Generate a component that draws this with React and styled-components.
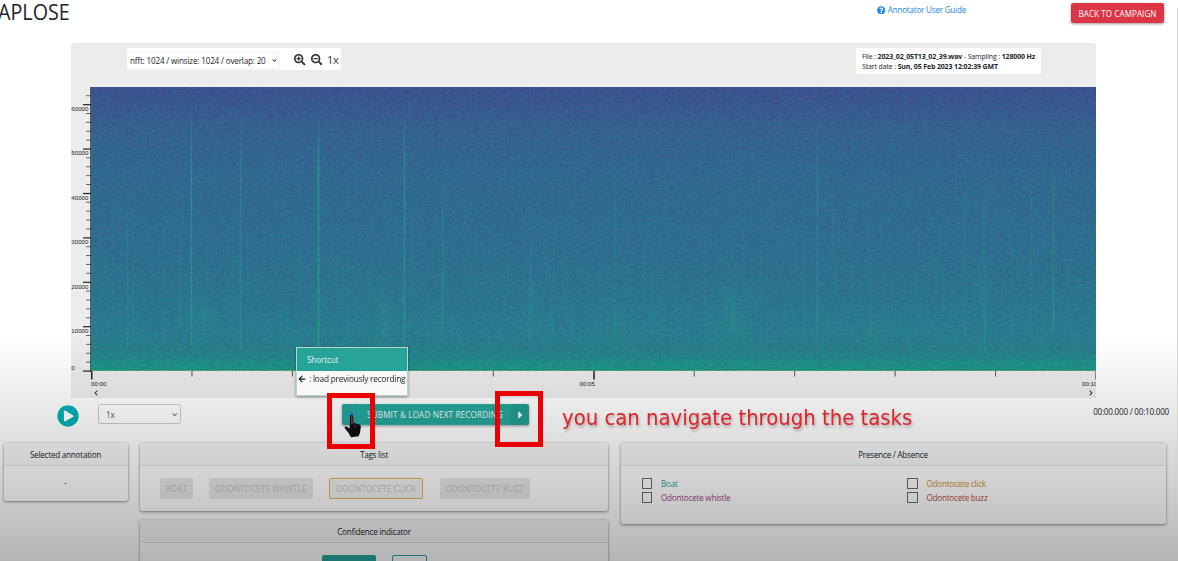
import React, { useEffect, useRef } from 'react';
import styled, { createGlobalStyle } from 'styled-components';
import {
  FaSearchPlus, FaSearchMinus, FaQuestionCircle, FaPlayCircle,
  FaArrowLeft, FaCaretLeft, FaCaretRight, FaChevronDown, FaChevronLeft, FaChevronRight,
} from 'react-icons/fa';

const Global = createGlobalStyle`
  * { box-sizing: border-box; }
  svg { flex-shrink: 0; }
  body {
    margin: 0;
    background: #fff;
    overflow: hidden;
    color: #212529;
    font: 8.1px/12px "Open Sans", "Noto Sans", sans-serif;
    letter-spacing: -0.22px;
  }
`;

const Page = styled.div`
  position: relative;
  height: 561px;
  overflow: hidden;
  display: flex;
  flex-direction: column;
`;

const Header = styled.header`
  height: 43px;
  flex: none;
  display: flex;
  align-items: flex-start;
  padding-right: 14px;
`;
const Title = styled.h1`
  margin: -3px 0 0 -2px;
  flex: 1;
  font-size: 21.8px;
  line-height: 30px;
  font-weight: 400;
  letter-spacing: 0;
  transform: scaleX(0.905);
  transform-origin: left;
`;
const GuideLink = styled.a`
  display: flex;
  align-items: center;
  gap: 2.5px;
  margin: 4px 105px 0 0;
  color: #1c86e8;
  svg { width: 8.5px; height: 8.5px; }
`;
const BackButton = styled.button`
  width: 93px;
  height: 20px;
  margin-top: 3px;
  padding: 1px 0 0;
  border: 0;
  border-radius: 2px;
  background: #dc3545;
  color: #fff;
  font: inherit;
  letter-spacing: 0.06px;
  white-space: nowrap;
  box-shadow: 0 1px 3px rgba(0, 0, 0, 0.4);
`;

const Workbench = styled.section`
  width: 1025px;
  height: 355px;
  flex: none;
  margin-left: 71px;
  background: #ececec;
  border-radius: 2px 2px 0 0;
`;
const Toolbar = styled.div`
  height: 44px;
  display: flex;
  justify-content: space-between;
  align-items: flex-start;
  padding: 5px 55px 0 56px;
`;
const ZoomControls = styled.div`
  width: 214px;
  height: 22px;
  display: flex;
  align-items: center;
  background: #fff;
  border-radius: 2px;
  padding-top: 3px;
`;
const FftSelect = styled.div`
  width: 153px;
  height: 17px;
  display: flex;
  align-items: center;
  gap: 6px;
  padding-left: 3px;
  white-space: nowrap;
  letter-spacing: -0.17px;
  border: 1px solid #f3f3f3;
  border-left: 0;
  svg { width: 5px; height: 5px; }
`;
const ZoomButtons = styled.div`
  display: flex;
  align-items: center;
  gap: 5px;
  padding: 0 0 1px 14px;
  font-size: 11px;
  color: #333;
  svg { width: 11.5px; height: 11.5px; }
`;
const FileInfo = styled.div`
  width: 185px;
  height: 26px;
  padding: 4px 0 0 6px;
  background: #fff;
  border-radius: 2px;
  font-size: 7px;
  line-height: 9.8px;
  letter-spacing: -0.14px;
  white-space: nowrap;
  b { font-weight: 700; }
`;
const Plot = styled.div`
  display: grid;
  grid-template-columns: 20px 1005px;
  grid-template-rows: 284px 27px;
`;
const Spectrum = styled.canvas`
  display: block;
  width: 1005px;
  height: 284px;
`;
const Axis = styled.svg`
  display: block;
  overflow: hidden;
  font-family: "Liberation Sans", Arial, sans-serif;
  font-size: 6.2px;
  letter-spacing: 0;
`;
const FrequencyAxis = styled(Axis)`
  height: 293px;
`;
const TimeColumn = styled.div`
  grid-column: 2;
  height: 27px;
  display: flex;
  flex-direction: column;
`;
const Scroller = styled.div`
  display: flex;
  justify-content: space-between;
  padding: 1px 2px 0 2px;
  color: #333;
  svg { width: 6px; height: 6px; }
`;

const Playback = styled.div`
  height: 45px;
  flex: none;
  display: flex;
  align-items: flex-start;
  padding: 6px 9px 0 57px;
`;
const PlayButton = styled.div`
  width: 22px;
  height: 24px;
  display: flex;
  align-items: center;
  color: #00b0b6;
  svg { width: 22px; height: 22px; border-radius: 50%; background: radial-gradient(#fff 55%, transparent 56%); }
`;
const SpeedSelect = styled.div`
  width: 83px;
  height: 20px;
  margin-left: 19px;
  display: flex;
  align-items: center;
  justify-content: space-between;
  padding: 1px 3px 0 7px;
  border: 1px solid #ccc;
  border-radius: 2.5px;
  background: #fff;
  color: #555;
  svg { width: 5.5px; height: 5.5px; }
`;
const SubmitGroup = styled.div`
  width: 187px;
  height: 21px;
  margin-left: 161px;
  display: flex;
  border-radius: 2px;
  background: #26a69a;
  color: #eefaf8;
  box-shadow: 0 1px 3px rgba(0, 0, 0, 0.4);
`;
const StepButton = styled.div`
  width: ${(p) => p.$width}px;
  display: flex;
  align-items: center;
  justify-content: center;
  padding-top: 1.5px;
  color: ${(p) => p.$color};
  background: ${(p) => (p.$dim ? 'rgba(0, 0, 0, 0.06)' : 'transparent')};
  svg { width: 9px; height: 12px; }
`;
const SubmitButton = styled.div`
  flex: 1;
  display: flex;
  align-items: center;
  justify-content: center;
  border: 1px solid #27b0ae;
  border-width: 1px 0 1px 1px;
  letter-spacing: 0.17px;
  white-space: nowrap;
`;
const Clock = styled.div`
  flex: 1;
  padding-top: 1.5px;
  text-align: right;
`;

const Panels = styled.div`
  display: grid;
  grid-template-columns: 124px 468px 545px;
  column-gap: 12.5px;
  align-items: start;
  padding-left: 3.5px;
`;
const Column = styled.div`
  display: flex;
  flex-direction: column;
  gap: 9px;
`;
const Card = styled.section`
  height: ${(p) => p.$height}px;
  background: #fff;
  border-radius: 2px;
  box-shadow: 0 1px 3px rgba(0, 0, 0, 0.42), 0 0 1px rgba(0, 0, 0, 0.3);
`;
const CardHeader = styled.header`
  height: 23px;
  line-height: 23px;
  text-align: center;
  background: #f7f7f7;
  border-bottom: 1px solid #e8e8e8;
`;
const Empty = styled.div`
  padding-top: 11px;
  text-align: center;
`;
const TagRow = styled.div`
  display: flex;
  gap: 16.5px;
  padding: 12px 0 0 20px;
`;
const Tag = styled.div`
  width: ${(p) => p.$width}px;
  height: 21px;
  line-height: 20px;
  text-align: center;
  white-space: nowrap;
  letter-spacing: 0.14px;
  border-radius: 2px;
  border: 1px solid ${(p) => (p.$outline ? '#e8b15c' : '#e9e9e9')};
  background: ${(p) => (p.$outline ? '#f3f3f3' : '#e9e9e9')};
  color: #c6c6c6;
`;
const ConfidenceRow = styled.div`
  display: flex;
  justify-content: center;
  gap: 16px;
  padding-top: 12px;
`;
const Choice = styled.div`
  width: ${(p) => p.$width}px;
  height: 21px;
  border: 1px solid #26a69a;
  border-radius: 2px;
  background: ${(p) => (p.$active ? '#26a69a' : 'transparent')};
`;
const PresenceGrid = styled.div`
  display: grid;
  grid-template-columns: 265.5px 1fr;
  row-gap: 4px;
  padding: 12.5px 0 0 21px;
`;
const Check = styled.label`
  display: flex;
  align-items: center;
  height: 10px;
  gap: 9px;
  color: ${(p) => p.$color};
`;
const CheckText = styled.span`
  padding-top: 1.5px;
`;
const Box = styled.span`
  width: 10.5px;
  height: 10.5px;
  border: 1px solid #6d6d6d;
`;

const Shade = styled.div`
  position: absolute;
  inset: 335px 0 0 0;
  pointer-events: none;
  background: linear-gradient(
    rgba(0, 0, 0, 0) 0,
    rgba(0, 0, 0, 0.075) 65px,
    rgba(0, 0, 0, 0.115) 95px,
    rgba(0, 0, 0, 0.205) 165px,
    rgba(0, 0, 0, 0.295) 226px
  );
`;
const PageEdge = styled.div`
  position: absolute;
  top: 8px;
  right: 0;
  width: 1px;
  height: 479px;
  background: #d2d2d2;
`;
const Tooltip = styled.div`
  position: absolute;
  left: 296px;
  top: 347px;
  width: 112px;
  height: 49px;
  background: #f8f8f8;
  border: 1px solid #b5d5d2;
  box-shadow: 0 1px 3px rgba(0, 0, 0, 0.4);
`;
const TooltipTitle = styled.div`
  height: 23px;
  line-height: 23px;
  padding-left: 10px;
  background: #27a397;
  color: #e6f6f4;
  letter-spacing: -0.1px;
`;
const TooltipBody = styled.div`
  display: flex;
  align-items: center;
  gap: 3px;
  padding: 2px 0 0 1px;
  font-size: 8.3px;
  white-space: nowrap;
  svg { width: 8px; height: 8px; }
`;
const Highlight = styled.div`
  position: absolute;
  left: ${(p) => p.$x}px;
  top: ${(p) => p.$y}px;
  width: 48px;
  height: 56px;
  border: 5.5px solid #ea0000;
`;
const Caption = styled.div`
  position: absolute;
  left: 562px;
  top: 403.5px;
  font: 21.9px/28px "DejaVu Sans Condensed", "DejaVu Sans", sans-serif;
  font-stretch: semi-condensed;
  letter-spacing: 0;
  color: #e0222a;
  white-space: nowrap;
  text-shadow: 1px 2px 3px rgba(0, 0, 0, 0.3);
`;
const Hand = styled.svg`
  position: absolute;
  left: 343.5px;
  top: 414px;
`;

const W = 1005;
const H = 284;

// Colour stops of the background level from the highest frequency to 0 Hz.
const STOPS = [
  [0, 58, 84, 142], [0.05, 57, 89, 143], [0.14, 52, 98, 143], [0.3, 48, 106, 144],
  [0.6, 45, 112, 143], [0.78, 42, 119, 143], [0.92, 40, 127, 142], [0.955, 36, 135, 141],
  [0.975, 31, 147, 137], [1, 31, 151, 133],
];

// Clicks: x, top, bottom, strength, half width.
const CLICKS = [
  [21, 120, 240, 0.12, 0], [36, 125, 262, 0.3, 0], [42, 130, 280, 0.18, 0], [89, 160, 240, 0.25, 0],
  [100, 25, 258, 0.6, 0], [112, 200, 250, 0.15, 1], [149, 30, 262, 0.38, 0], [227, 30, 262, 0.72, 0],
  [313, 25, 262, 0.55, 0], [292, 190, 250, 0.2, 1], [295, 220, 245, 0.25, 1], [269, 200, 245, 0.12, 0],
  [351, 90, 245, 0.32, 0], [379, 140, 210, 0.18, 0], [384, 150, 190, 0.14, 0], [439, 120, 265, 0.28, 0],
  [472, 120, 230, 0.12, 0], [523, 190, 245, 0.4, 0], [524, 60, 190, 0.13, 0], [567, 200, 240, 0.2, 0],
  [597, 220, 255, 0.14, 0], [614, 200, 240, 0.2, 0], [642, 190, 245, 0.14, 2], [669, 120, 250, 0.14, 0],
  [701, 220, 242, 0.3, 0], [713, 110, 250, 0.15, 0], [726, 35, 250, 0.36, 0], [733, 210, 240, 0.2, 0],
  [741, 90, 160, 0.22, 0], [779, 190, 250, 0.15, 1], [825, 190, 220, 0.16, 0], [851, 210, 235, 0.25, 0],
  [874, 50, 250, 0.16, 0], [893, 90, 225, 0.12, 1], [893, 222, 265, 0.6, 0], [940, 70, 240, 0.2, 0],
  [962, 60, 245, 0.27, 0], [962, 180, 245, 0.3, 0], [970, 190, 240, 0.13, 0],
];
// Diffuse patches of energy: x, y, radius x, radius y, strength.
const PATCHES = [
  [116, 231, 12, 9, 0.18], [296, 235, 7, 26, 0.08], [350, 235, 12, 24, 0.05], [527, 235, 20, 30, 0.07],
  [642, 232, 16, 26, 0.13], [441, 232, 12, 22, 0.08], [568, 225, 10, 22, 0.04], [800, 238, 60, 20, 0.05],
  [250, 215, 40, 45, 0.04], [893, 215, 7, 35, 0.05],
];

function random(seed) {
  let s = seed;
  return () => {
    s = (s * 1664525 + 1013904223) >>> 0;
    return s / 4294967296;
  };
}

function level(t) {
  let i = 1;
  while (i < STOPS.length - 1 && STOPS[i][0] < t) i += 1;
  const a = STOPS[i - 1];
  const b = STOPS[i];
  const k = (t - a[0]) / (b[0] - a[0]);
  return [1, 2, 3].map((c) => a[c] + (b[c] - a[c]) * k);
}

function drawSpectrum(ctx) {
  const rnd = random(42);
  const energy = new Float32Array(W * H);
  CLICKS.forEach(([cx, top, bottom, amp, half]) => {
    for (let y = top; y < bottom; y += 1) {
      const k = Math.min(1, (y - top) / 60 + 0.25) * (0.65 + rnd() * 0.5);
      for (let x = cx - half - 1; x <= cx + half + 1; x += 1) {
        energy[y * W + x] += amp * k * (Math.abs(x - cx) > half ? 0.2 : 1);
      }
    }
  });
  for (let n = 0; n < 330; n += 1) {
    const cx = Math.floor(rnd() * W);
    const top = Math.floor(130 + rnd() * 110);
    const length = 15 + rnd() * 60;
    const amp = 0.03 + rnd() * 0.09;
    for (let y = top; y < Math.min(top + length, 270); y += 1) energy[y * W + cx] += amp;
  }
  PATCHES.forEach(([cx, cy, rx, ry, amp]) => {
    for (let y = Math.max(0, cy - 2 * ry); y < Math.min(H, cy + 2 * ry); y += 1) {
      for (let x = Math.max(0, cx - 2 * rx); x < Math.min(W, cx + 2 * rx); x += 1) {
        energy[y * W + x] += amp * Math.exp(-(((x - cx) / rx) ** 2) - ((y - cy) / ry) ** 2);
      }
    }
  });
  const grain = new Float32Array(W * H);
  for (let i = 0; i < W * H; i += 1) {
    const r = rnd() + rnd() + rnd() - 1.5;
    grain[i] = r < 0 ? r * 1.35 : r * 0.8;
  }
  const image = ctx.createImageData(W, H);
  for (let y = 0; y < H; y += 1) {
    const base = level(y / (H - 1));
    for (let x = 0; x < W; x += 1) {
      const i = y * W + x;
      const g = grain[i] * 0.68 + (grain[i - 1] || 0) * 0.34 + (grain[i - W] || 0) * 0.34;
      const e = Math.min(0.9, energy[i]);
      const last = y === H - 1 ? 0.2 + rnd() * 0.35 : 0;
      let r = base[0] - g * 3;
      let gr = base[1] + g * 10.5;
      let b = base[2] + g * 4;
      r += (38 - r) * e;
      gr += (172 - gr) * e;
      b += (133 - b) * e;
      r += (140 - r) * last;
      gr += (200 - gr) * last;
      b += (80 - b) * last;
      image.data[i * 4] = r;
      image.data[i * 4 + 1] = gr;
      image.data[i * 4 + 2] = b;
      image.data[i * 4 + 3] = 255;
    }
  }
  ctx.putImageData(image, 0, 0);
}

function Spectrogram() {
  const ref = useRef(null);
  useEffect(() => drawSpectrum(ref.current.getContext('2d')), []);
  return <Spectrum ref={ref} width={W} height={H} />;
}

function FrequencyScale() {
  return (
    <FrequencyAxis width="20" height="293">
      {Array.from({ length: 32 }, (_, i) => {
        const y = 284 - i * 8.88;
        const major = i % 5 === 0;
        return (
          <rect key={i} x={major ? 12 : 15} y={y - 0.5} width={major ? 8 : 5} height={major ? 1.2 : 1} fill={major ? '#222' : '#666'} />
        );
      })}
      <rect x="19.3" y="0" width="1" height="284" fill="#222" />
      {[0, 1, 2, 3, 4, 5, 6].map((k) => (
        <text key={k} x="0.3" y={k === 0 ? 283.3 : 290.3 - k * 44.4} fill="#222">{k * 10000}</text>
      ))}
    </FrequencyAxis>
  );
}

function TimeScale() {
  return (
    <Axis width="1005" height="18">
      {Array.from({ length: 11 }, (_, i) => {
        const major = i % 5 === 0;
        return (
          <rect key={i} x={i * 100.45} y="0" width={major ? 1.5 : 1} height={major ? 8.5 : 5.5} fill={major ? '#222' : '#555'} />
        );
      })}
      <text x="0" y="14.5" fill="#222">00:00</text>
      <text x="488.5" y="14.5" fill="#222">00:05</text>
      <text x="991" y="14.5" fill="#222">00:10</text>
    </Axis>
  );
}

function Presence({ color, children }) {
  return <Check $color={color}><Box /><CheckText>{children}</CheckText></Check>;
}

export default function App() {
  return (
    <Page>
      <Global />
      <Header>
        <Title>APLOSE</Title>
        <GuideLink><FaQuestionCircle />Annotator User Guide</GuideLink>
        <BackButton>BACK TO CAMPAIGN</BackButton>
      </Header>

      <Workbench>
        <Toolbar>
          <ZoomControls>
            <FftSelect>nfft: 1024 / winsize: 1024 / overlap: 20 <FaChevronDown /></FftSelect>
            <ZoomButtons><FaSearchPlus /><FaSearchMinus />1x</ZoomButtons>
          </ZoomControls>
          <FileInfo>
            File : <b>2023_02_05T13_02_39.wav</b> - Sampling : <b>128000 Hz</b><br />
            Start date : <b>Sun, 05 Feb 2023 12:02:39 GMT</b>
          </FileInfo>
        </Toolbar>
        <Plot>
          <FrequencyScale />
          <Spectrogram />
          <TimeColumn>
            <TimeScale />
            <Scroller><FaChevronLeft /><FaChevronRight /></Scroller>
          </TimeColumn>
        </Plot>
      </Workbench>

      <Playback>
        <PlayButton><FaPlayCircle /></PlayButton>
        <SpeedSelect>1x <FaChevronDown /></SpeedSelect>
        <SubmitGroup>
          <StepButton $width={16} $color="#1f7fd6"><FaCaretLeft /></StepButton>
          <SubmitButton>SUBMIT &amp; LOAD NEXT RECORDING</SubmitButton>
          <StepButton $width={18} $color="#fff" $dim><FaCaretRight /></StepButton>
        </SubmitGroup>
        <Clock>00:00.000 / 00:10.000</Clock>
      </Playback>

      <Panels>
        <Card $height={57.5}>
          <CardHeader>Selected annotation</CardHeader>
          <Empty>-</Empty>
        </Card>
        <Column>
          <Card $height={68}>
            <CardHeader>Tags list</CardHeader>
            <TagRow>
              <Tag $width={32.5}>BOAT</Tag>
              <Tag $width={103.5}>ODONTOCETE WHISTLE</Tag>
              <Tag $width={94} $outline>ODONTOCETE CLICK</Tag>
              <Tag $width={90}>ODONTOCETE BUZZ</Tag>
            </TagRow>
          </Card>
          <Card $height={68}>
            <CardHeader>Confidence indicator</CardHeader>
            <ConfidenceRow>
              <Choice $width={54} $active />
              <Choice $width={35} />
            </ConfidenceRow>
          </Card>
        </Column>
        <Card $height={81}>
          <CardHeader>Presence / Absence</CardHeader>
          <PresenceGrid>
            <Presence color="#1fa9a5">Boat</Presence>
            <Presence color="#cc9230">Odontocete click</Presence>
            <Presence color="#9c4a86">Odontocete whistle</Presence>
            <Presence color="#b84840">Odontocete buzz</Presence>
          </PresenceGrid>
        </Card>
      </Panels>

      <Shade />
      <PageEdge />
      <Tooltip>
        <TooltipTitle>Shortcut</TooltipTitle>
        <TooltipBody><FaArrowLeft />: load previously recording</TooltipBody>
      </Tooltip>
      <Highlight $x={327} $y={392.5} />
      <Highlight $x={494.5} $y={391} />
      <Hand width="18" height="24" viewBox="0 0 18 24">
        <path d="M6.2 2.2C6.2.6 9 .6 9.1 2.2L9.6 9l5.2 1.2c1.6.4 2.2 1.4 2 3l-.8 5.6-1.4 3.4-7.6 1-2.6-4.4-3.6-4.6c-.6-1.4 1-2.4 2.4-1.2l2.4 1.6z" fill="#0b0b0c" />
        <path d="M7.1 2.6h1.2l.5 7.6H7.3z" fill="#9a3246" />
        <path d="M10.4 10.4v2.4M12.8 11v2.4" stroke="#6e2936" strokeWidth=".8" fill="none" />
      </Hand>
      <Caption>you can navigate through the tasks</Caption>
    </Page>
  );
}
